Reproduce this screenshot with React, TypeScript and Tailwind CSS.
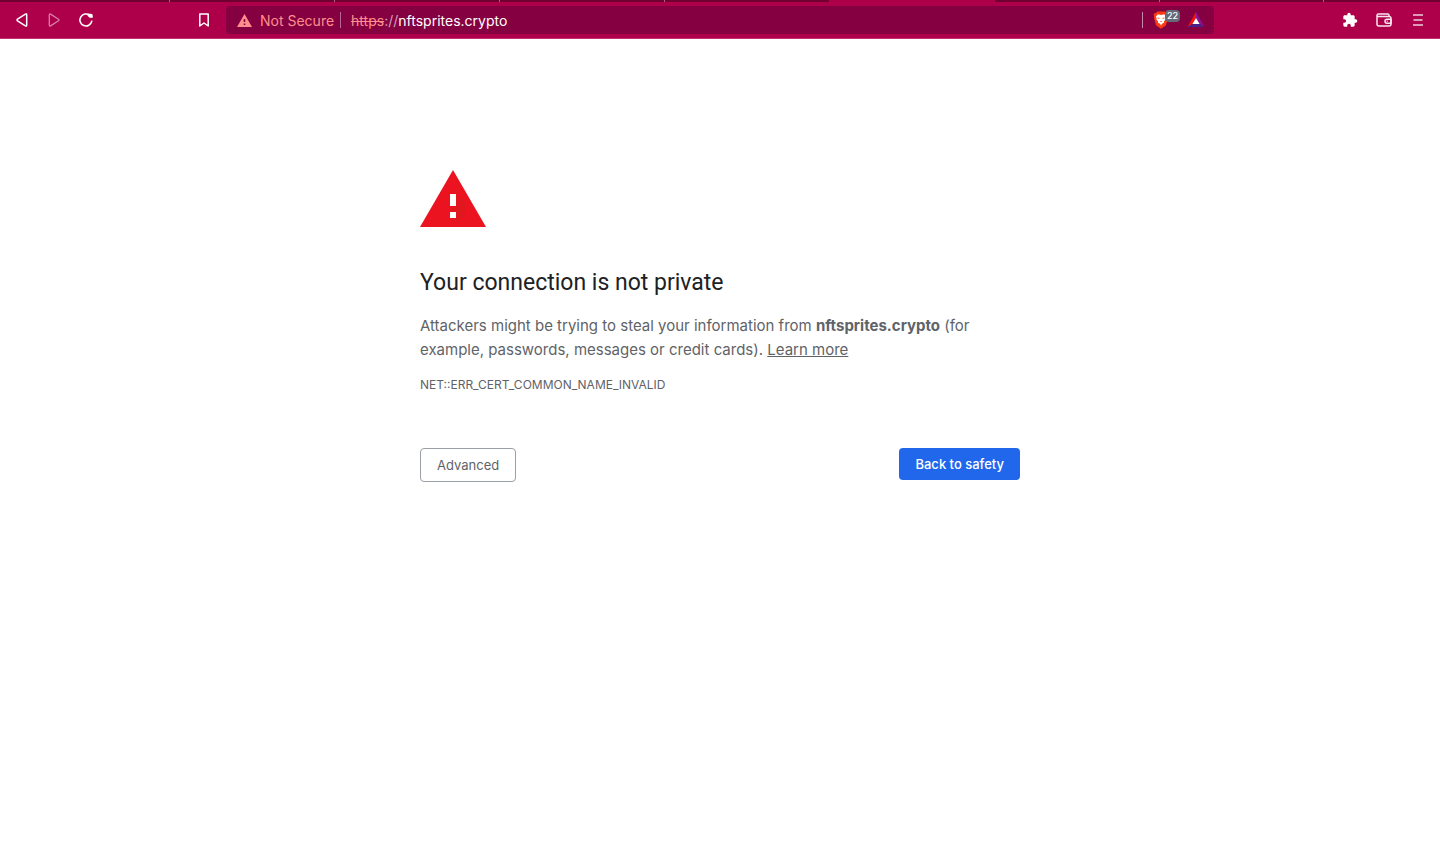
import type { ReactNode } from "react";

type IconButtonProps = { label: string; className?: string; disabled?: boolean; children: ReactNode };

function IconButton({ label, className = "w-8", disabled, children }: IconButtonProps) {
  return (
    <button type="button" aria-label={label} disabled={disabled} className={`flex h-7 items-center justify-center text-white ${className}`}>
      {children}
    </button>
  );
}

function TabStrip() {
  return (
    <div className="flex h-0.5 bg-[#6f002f]">
      <div className="w-[170px] border-r border-[#a66586]" />
      <div className="w-[165px] border-r border-[#a66586]" />
      <div className="w-[165px] border-r border-[#a66586]" />
      <div className="w-[165px] border-r border-[#a66586]" />
      <div className="w-[164px]" />
      <div className="w-[166px] bg-[#ae004a]" />
      <div className="w-[165px] border-r border-[#a66586]" />
      <div className="w-[164px] border-r border-[#a66586]" />
    </div>
  );
}

function ShieldIcon() {
  return (
    <svg width="16" height="18" viewBox="0 0 16 18" aria-hidden="true">
      <path d="M4.4 0.5h7.2l1.5 1.5 1.3-.1 1 2-.5 1.3.3 1-2 7.2c-.3.9-.8 1.4-1.5 1.9L8 17.7l-3.700-2.400c-.7-.5-1.200-1-1.500-1.900L.8 6.200l.3-1-.5-1.300 1-2 1.300.1z" fill="#fb3a12" />
      <path d="M4.800 3.300l3.200.6 3.200-.6 2 2.500-.8 1.500.2 1.100-1.800 2.100.3 1.200-2.100 1L8 14.600l-1-1.900-2.100-1 .3-1.200-1.800-2.100.2-1.100-.8-1.500z" fill="#fff" />
      <path d="M4.500 6.400l2.200.5-.4.900-1.500-.4zM11.500 6.400l-2.200.5.4.9 1.500-.4zM6.700 10.200h2.600L8 11.200z" fill="#fb3a12" />
    </svg>
  );
}

function RewardsIcon() {
  return (
    <svg width="18" height="16" viewBox="0 0 18 16" aria-hidden="true">
      <path d="M9 0L0.500 15 5.400 12 9 6z" fill="#f5140a" />
      <path d="M9 0l8.500 15-4.900-3L9 6z" fill="#8c1291" />
      <path d="M.5 15h17l-4.900-3H5.400z" fill="#4a2088" />
      <path d="M9 6l3.600 6H5.400z" fill="#fff" />
    </svg>
  );
}

function AddressBar() {
  return (
    <div className="flex h-7 min-w-0 flex-1 items-center rounded bg-[#850040] pr-[9px] pl-[11px] text-[14px]">
      <button type="button" className="flex shrink-0 items-center gap-2 text-[#ff8f8d]">
        <svg width="15" height="13" viewBox="0 0 15 13" aria-hidden="true">
          <path fillRule="evenodd" d="M7.500 0L15 13H0zM6.700 5v3h1.600V5zM6.700 9.500v1.600h1.600V9.500z" fill="currentColor" />
        </svg>
        <span>Not Secure</span>
      </button>
      <div className="ml-1.5 h-4 w-px shrink-0 bg-[#b86690]" />
      <div className="ml-2.5 flex min-w-0 flex-1 items-center">
        <span className="text-[#ff8f8d] line-through">https</span>
        <span className="text-[#d3a0b8]">://</span>
        <input aria-label="Address and search bar" defaultValue="nftsprites.crypto" className="min-w-0 flex-1 bg-transparent text-white outline-none" />
      </div>
      <div className="mr-2.5 h-4 w-px shrink-0 bg-[#c58aa8]" />
      <button type="button" aria-label="Brave Shields, 22 blocked" className="relative w-7 shrink-0">
        <ShieldIcon />
        <span className="absolute -top-px left-3 flex h-3 w-[15px] items-center justify-center rounded bg-[#636a78] text-[9px] font-medium text-white">22</span>
      </button>
      <button type="button" aria-label="Brave Rewards" className="ml-1.5 shrink-0">
        <RewardsIcon />
      </button>
    </div>
  );
}

function Toolbar() {
  return (
    <div className="flex h-[37px] items-start border-b border-[#c33070] bg-[#ae004a] pt-1">
      <div className="flex w-[226px] shrink-0 px-1.5">
        <IconButton label="Back">
          <svg width="12" height="14" viewBox="0 0 12 14" fill="none" stroke="currentColor" strokeWidth="1.500" strokeLinejoin="round" aria-hidden="true">
            <path d="M9.400 1.100L1.500 6.200q-1 .8 0 1.600l7.900 5.100q1.300.6 1.300-.8V1.900q0-1.400-1.300-.8z" />
          </svg>
        </IconButton>
        <IconButton label="Forward" disabled>
          <svg className="opacity-50" width="12" height="14" viewBox="0 0 12 14" fill="none" stroke="currentColor" strokeWidth="1.300" strokeLinejoin="round" aria-hidden="true">
            <path d="M2.600 1.100l7.900 5.100q1 .8 0 1.600l-7.900 5.100q-1.300.6-1.300-.8V1.900q0-1.400 1.300-.8z" />
          </svg>
        </IconButton>
        <IconButton label="Reload">
          <svg width="16" height="16" viewBox="0 0 16 16" fill="none" aria-hidden="true">
            <path d="M11.600 3.200A6 6 0 1 0 13.800 9.200" stroke="currentColor" strokeWidth="1.600" strokeLinecap="round" />
            <path d="M9.500 1.800h3.300q2 0 2 2v2H11.600L9.500 3.800z" fill="currentColor" />
          </svg>
        </IconButton>
        <IconButton label="Bookmark this page" className="ml-auto w-8">
          <svg width="12" height="14" viewBox="0 0 12 14" fill="none" stroke="currentColor" strokeWidth="1.500" strokeLinejoin="round" aria-hidden="true">
            <path d="M1.800 1h8.400v12L6 10l-4.200 3z" />
          </svg>
        </IconButton>
      </div>
      <AddressBar />
      <div className="flex w-[226px] shrink-0 justify-end pr-[5px]">
        <IconButton label="Extensions" className="w-[34px]">
          <svg width="16" height="16" viewBox="0 0 24 24" fill="currentColor" aria-hidden="true">
            <path d="M20.500 11H19V7c0-1.100-.9-2-2-2h-4V3.500a2.500 2.500 0 0 0-5 0V5H4c-1.100 0-2 .9-2 2v3.800h1.500a2.700 2.700 0 0 1 0 5.400H2V20c0 1.100.9 2 2 2h3.800v-1.500a2.700 2.700 0 0 1 5.400 0V22H17c1.100 0 2-.9 2-2v-4h1.500a2.500 2.500 0 0 0 0-5z" />
          </svg>
        </IconButton>
        <IconButton label="Wallet" className="w-[34px]">
          <svg className="opacity-90" width="16" height="14" viewBox="0 0 16 14" fill="none" stroke="currentColor" strokeWidth="1.500" strokeLinejoin="round" aria-hidden="true">
            <path d="M13 3.600V2.300Q13 1 11.700 1H2.400Q1 1 1 2.400V11q0 2 2 2h10q2 0 2-2V5.600q0-2-2-2H2.500Q1 3.600 1 2.400" />
            <path d="M15 6.300h-4a2 2 0 0 0 0 4h4z" />
            <path d="M10.800 8.300h.9" />
          </svg>
        </IconButton>
        <IconButton label="Menu" className="w-[34px]">
          <svg className="opacity-80" width="10" height="12" viewBox="0 0 10 12" fill="none" stroke="currentColor" strokeWidth="1.500" aria-hidden="true">
            <path d="M0 1h10M0.500 6h9M0 11h10" />
          </svg>
        </IconButton>
      </div>
    </div>
  );
}

export default function App() {
  return (
    <div className="min-h-screen bg-white font-['Inter','Liberation_Sans',sans-serif]">
      <header>
        <TabStrip />
        <Toolbar />
      </header>
      <main className="mx-auto max-w-[600px] pt-[131px] text-[15px] leading-6 text-[#5f6368]">
        <svg width="66" height="57" viewBox="0 0 66 57" role="img" aria-label="Warning">
          <path d="M33 0l33 57H0z" fill="#ea131f" />
          <path d="M36 24l10 10v10L36 54l-6-6z" fill="#d81a20" opacity=".6" />
          <path d="M30 24h6v12h-6zM30 42h6v6h-6z" fill="#fff" />
        </svg>
        <h1 className="mt-10 font-['Roboto','Liberation_Sans',sans-serif] text-[23px] leading-8 text-[#202124]">Your connection is not private</h1>
        <p className="mt-[15px]">
          Attackers might be trying to steal your information from <strong className="font-bold">nftsprites.crypto</strong> (for example, passwords, messages or credit cards).{" "}
          <a href="#learn-more" className="underline">Learn more</a>
        </p>
        <p className="mt-[11px] text-[12px]">NET::ERR_CERT_COMMON_NAME_INVALID</p>
        <div className="mt-[51px] flex items-start justify-between text-[13px]">
          <button type="button" className="h-[34px] rounded border border-[#9aa0a6] px-4">Advanced</button>
          <button type="button" className="h-8 rounded bg-[#2067ec] px-4 font-medium text-white">Back to safety</button>
        </div>
      </main>
    </div>
  );
}
